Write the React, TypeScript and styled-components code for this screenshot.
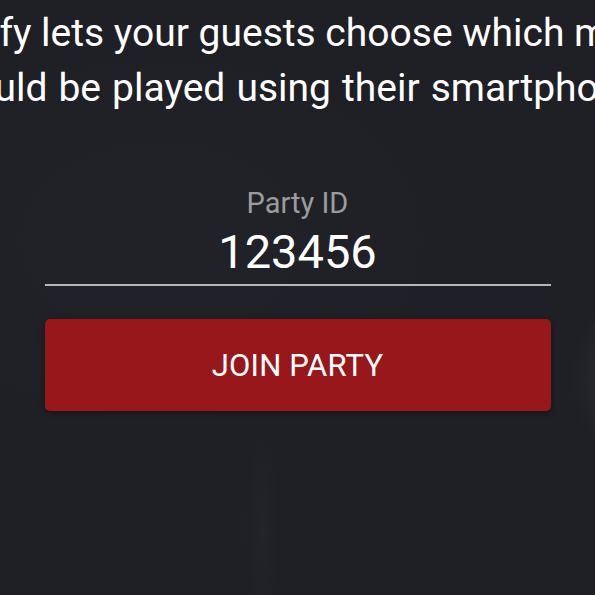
import React from "react";
import styled, { createGlobalStyle } from "styled-components";

const GlobalStyle = createGlobalStyle`
  html, body {
    margin: 0;
    padding: 0;
    background: #1f2025;
  }
  body {
    font-family: Roboto, "Noto Sans", "Liberation Sans", sans-serif;
    overflow: hidden;
  }
`;

const Page = styled.main`
  width: 595px;
  height: 595px;
  overflow: hidden;
  box-sizing: border-box;
  padding-top: 6px;
  background-color: #1f2025;
  background-image:
    radial-gradient(ellipse 60px 80px at 630px 378px, rgba(255,255,255,0.07), rgba(255,255,255,0) 100%),
    radial-gradient(ellipse 18px 100px at 262px 530px, rgba(255,255,255,0.018), rgba(255,255,255,0) 100%),
    radial-gradient(ellipse 320px 220px at 160px 240px, rgba(255,255,255,0.012), rgba(255,255,255,0) 100%);
  display: flex;
  flex-direction: column;
  align-items: center;
`;

const Intro = styled.p`
  margin: 0;
  width: 820px;
  flex-shrink: 0;
  color: #ffffff;
  font-size: 39px;
  line-height: 55px;
  font-weight: 400;
  white-space: nowrap;
`;

const IntroLine = styled.span<{ $wordSpacing?: number; $nudge?: number }>`
  display: block;
  text-align: center;
  word-spacing: ${(p) => p.$wordSpacing ?? 0}px;
  padding-left: ${(p) => (p.$nudge ?? 0) * 2}px;
`;

const Form = styled.form`
  width: 506px;
  margin-top: 70px;
  display: flex;
  flex-direction: column;
  align-items: stretch;
`;

const Field = styled.label`
  display: flex;
  flex-direction: column;
  align-items: center;
  border-bottom: 2px solid #b7b7b9;
  padding-bottom: 4px;
`;

const FieldLabel = styled.span`
  color: #9c9c9f;
  font-size: 29px;
  line-height: 34px;
`;

const FieldInput = styled.input`
  background: transparent;
  border: none;
  outline: none;
  width: 100%;
  padding: 0;
  margin-top: 4px;
  text-align: center;
  color: #ffffff;
  font-family: inherit;
  font-size: 47px;
  line-height: 56px;
  height: 56px;
`;

const JoinButton = styled.button`
  margin-top: 33px;
  height: 92px;
  padding: 0;
  border: none;
  border-radius: 5px;
  background: #98171b;
  color: #ffffff;
  font-family: inherit;
  font-size: 31px;
  letter-spacing: 0.2px;
  text-transform: uppercase;
  box-shadow: 0 2px 6px rgba(0, 0, 0, 0.35);
  cursor: pointer;
`;

export default function App() {
  return (
    <>
      <GlobalStyle />
      <Page>
        <Intro>
          <IntroLine>Festify lets your guests choose which music</IntroLine>
          <IntroLine $wordSpacing={1.4} $nudge={3.5}>
            should be played using their smartphones.
          </IntroLine>
        </Intro>
        <Form onSubmit={(e) => e.preventDefault()}>
          <Field>
            <FieldLabel>Party ID</FieldLabel>
            <FieldInput defaultValue="123456" />
          </Field>
          <JoinButton type="submit">Join Party</JoinButton>
        </Form>
      </Page>
    </>
  );
}
